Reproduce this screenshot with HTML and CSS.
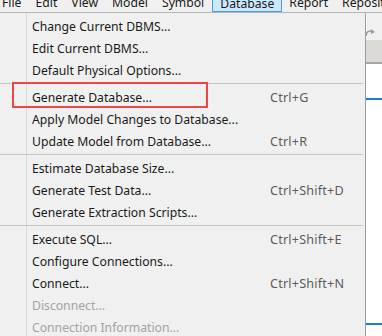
FILE: index.html
```html
<!DOCTYPE html>
<html lang="en">
<head>
    <meta charset="UTF-8">
    <title>Database Menu</title>
    <link rel="stylesheet" href="styles.css">
</head>
<body>
    <!-- Menu bar (top is cut off in the window) -->
    <div class="menubar">
        <span class="menubar-item item-file">File</span>
        <span class="menubar-item">Edit</span>
        <span class="menubar-item">View</span>
        <span class="menubar-item">Model</span>
        <span class="menubar-item">Symbol</span>
        <span class="menubar-item active">Database</span>
        <span class="menubar-item">Report</span>
        <span class="menubar-item">Repository</span>
    </div>

    <div class="workspace">
        <!-- Database dropdown -->
        <div class="dropdown">
            <div class="menu-item"><span class="label">Change Current DBMS...</span></div>
            <div class="menu-item"><span class="label">Edit Current DBMS...</span></div>
            <div class="menu-item"><span class="label">Default Physical Options...</span></div>
            <div class="separator"></div>
            <div class="menu-item"><span class="label">Generate Database...</span><span class="shortcut">Ctrl+G</span></div>
            <div class="menu-item"><span class="label">Apply Model Changes to Database...</span></div>
            <div class="menu-item"><span class="label">Update Model from Database...</span><span class="shortcut">Ctrl+R</span></div>
            <div class="separator"></div>
            <div class="menu-item"><span class="label">Estimate Database Size...</span></div>
            <div class="menu-item"><span class="label">Generate Test Data...</span><span class="shortcut">Ctrl+Shift+D</span></div>
            <div class="menu-item"><span class="label">Generate Extraction Scripts...</span></div>
            <div class="separator"></div>
            <div class="menu-item"><span class="label">Execute SQL...</span><span class="shortcut">Ctrl+Shift+E</span></div>
            <div class="menu-item"><span class="label">Configure Connections...</span></div>
            <div class="menu-item"><span class="label">Connect...</span><span class="shortcut">Ctrl+Shift+N</span></div>
            <div class="menu-item disabled"><span class="label">Disconnect...</span></div>
            <div class="menu-item disabled"><span class="label">Connection Information...</span></div>

            <!-- annotation box -->
            <div class="highlight-box"></div>
        </div>

        <!-- Diagram area behind the menu -->
        <div class="canvas">
            <div class="toolbar">
                <svg class="redo-icon" width="14" height="12" viewBox="0 0 14 12">
                    <path d="M2 9 C2 4 6 3 9 5" fill="none" stroke="#9a9a9a" stroke-width="1.5"/>
                    <path d="M7 2 L11 5 L7 7 Z" fill="#9a9a9a"/>
                </svg>
            </div>
            <div class="toolbar-lower"></div>
            <div class="diagram">
                <div class="link link-top"></div>
                <div class="link link-bottom"></div>
            </div>
        </div>
    </div>
</body>
</html>
```

FILE: styles.css
```css
body {
    margin: 0;
    background-color: #ffffff;
    font-family: "Noto Sans", Arial, sans-serif;
    font-size: 12.2px;
    color: #1a1a1a;
    width: 382px;
    height: 336px;
    overflow: hidden;
}

/* Menu bar */
.menubar {
    height: 12px;
    background-color: #f0f0f0;
    border-bottom: 1px solid #b4b4b4;
    display: flex;
    overflow: hidden;
    white-space: nowrap;
}

.menubar-item {
    display: block;
    height: 16px;
    margin-top: -5px;
    line-height: 16px;
    padding: 0 7px;
    box-sizing: border-box;
}

.item-file {
    margin-left: -5px;
}

.menubar-item.active {
    background-color: #cce8ff;
    border: 1px solid #4a9fd8;
    padding: 0 7px;
    height: 17px;
    margin-left: 1px;
}

/* Workspace */
.workspace {
    display: flex;
    height: 323px;
}

.dropdown {
    position: relative;
    width: 365px;
    padding-top: 2px;
    background: linear-gradient(to right, transparent 26px, #d9d9d9 26px, #d9d9d9 27px, transparent 27px), #f0f0f0;
    border-right: 1px solid #9c9c9c;
    flex-shrink: 0;
}

.menu-item {
    height: 22px;
    display: flex;
    align-items: center;
    padding-left: 32px;
}

.label {
    width: 238px;
    white-space: nowrap;
}

.shortcut {
    color: #5c5c5c;
    font-size: 12.6px;
    letter-spacing: 0.2px;
    white-space: nowrap;
}

.menu-item.disabled {
    color: #a3a3a3;
}

.separator {
    height: 5px;
    margin-right: 2px;
    background: linear-gradient(to bottom, transparent 2px, #c6c6c6 2px, #c6c6c6 3px, transparent 3px);
}

.highlight-box {
    position: absolute;
    left: 12px;
    top: 69px;
    width: 192px;
    height: 22px;
    border: 2px solid #ee4646;
}

/* Canvas to the right */
.canvas {
    flex: 1;
    display: flex;
    flex-direction: column;
}

.toolbar {
    height: 27px;
    background-color: #f0f0f0;
    border-left: 1px solid #fafafa;
}

.redo-icon {
    margin-top: 14px;
    margin-left: -3px;
}

.toolbar-lower {
    height: 22px;
    background-color: #dcdad7;
    border-bottom: 2px solid #a6a6a6;
}

.diagram {
    flex: 1;
    background-color: #ffffff;
    display: flex;
    flex-direction: column;
}

.link {
    height: 2px;
    background-color: #1f7ccf;
}

.link-top {
    margin-top: 34px;
}

.link-bottom {
    margin-top: 223px;
}
```
